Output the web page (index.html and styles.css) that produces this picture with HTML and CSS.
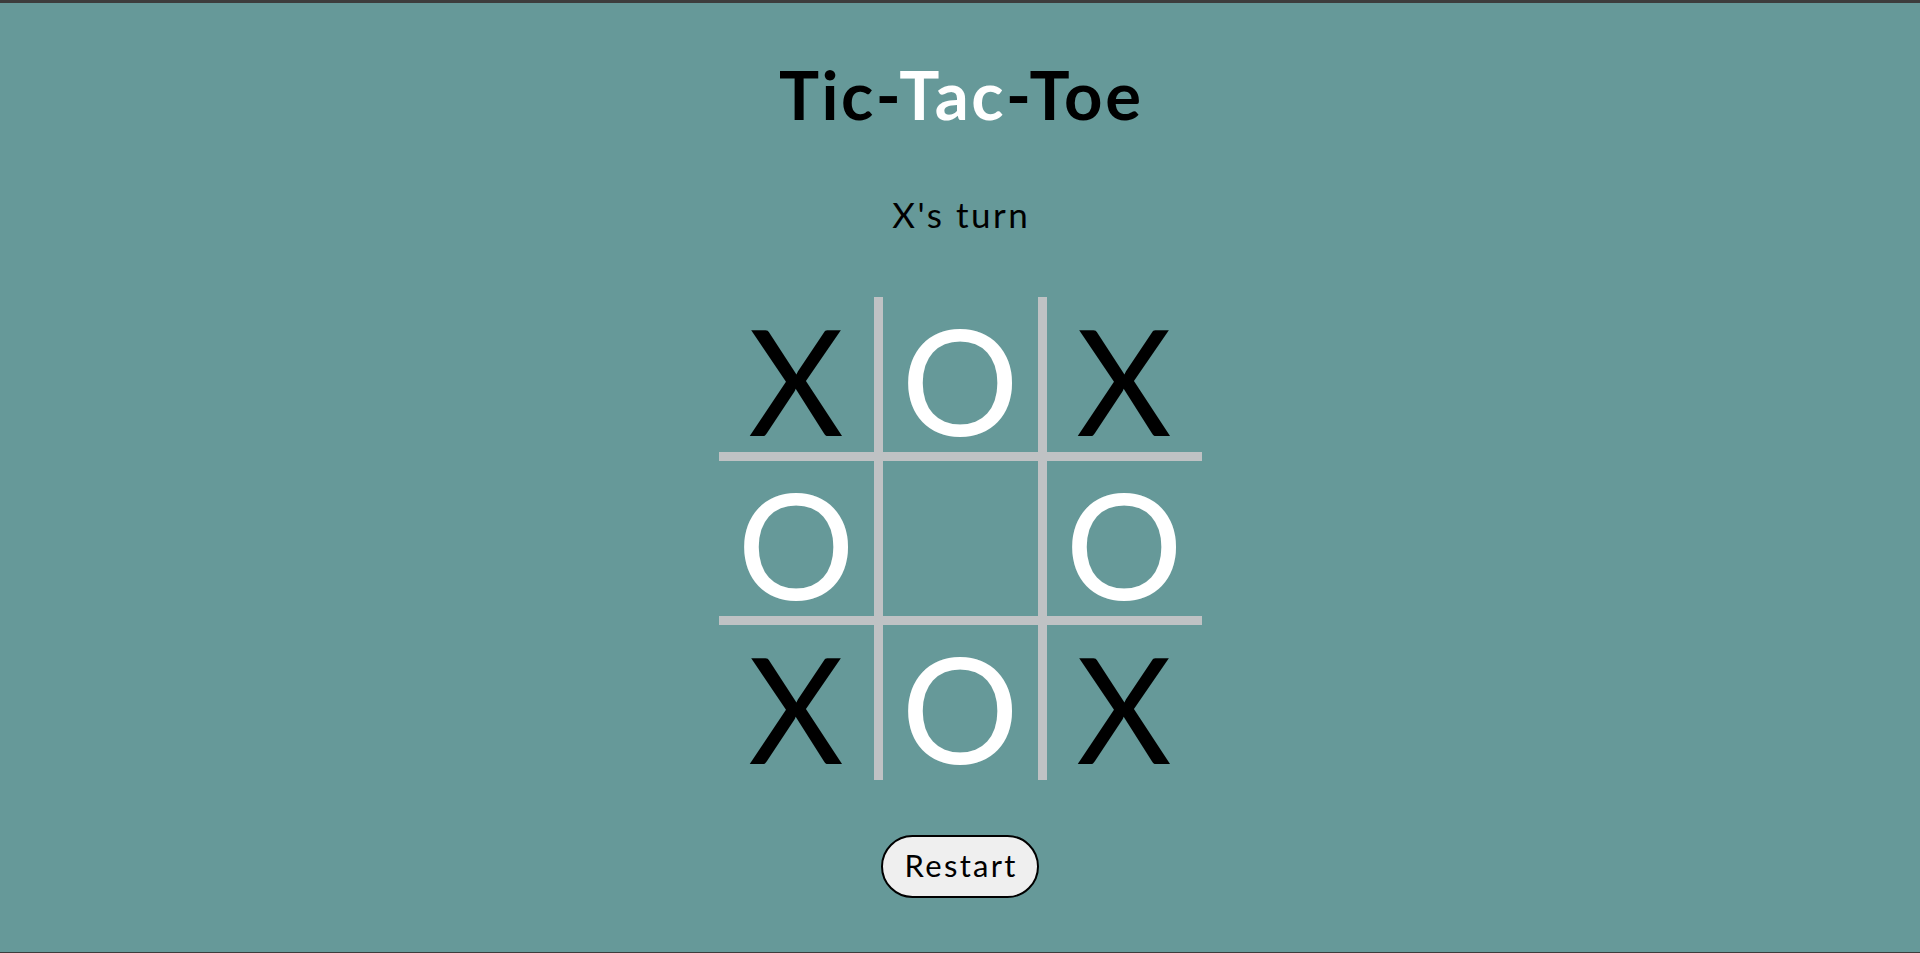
FILE: index.html
```html
<!DOCTYPE html>
<html lang="en">
<head>
<meta charset="utf-8">
<title>Tic-Tac-Toe</title>
<link rel="stylesheet" href="styles.css">
</head>
<body>
  <main class="game">
    <h1 class="title">Tic-<span class="title-accent">Tac</span>-Toe</h1>
    <p class="status">X's turn</p>
    <div class="board">
      <div class="cell cell-x">X</div>
      <div class="cell cell-o">O</div>
      <div class="cell cell-x">X</div>
      <div class="cell cell-o">O</div>
      <div class="cell"></div>
      <div class="cell cell-o">O</div>
      <div class="cell cell-x">X</div>
      <div class="cell cell-o">O</div>
      <div class="cell cell-x">X</div>
    </div>
    <button class="restart" type="button">Restart</button>
  </main>
</body>
</html>
```

FILE: styles.css
```css
* {
  box-sizing: border-box;
}

html {
  background: #3d3d3d;
}

body {
  margin: 3px 0 1px;
  height: calc(100vh - 4px);
  background: #669999;
  font-family: "Lato", "DejaVu Sans", sans-serif;
  color: #000;
}

.game {
  display: flex;
  flex-direction: column;
  align-items: center;
}

.title {
  margin: 58px 0 0;
  padding-left: 2.6px;
  font-size: 67px;
  line-height: 67px;
  font-weight: 700;
  letter-spacing: 2.6px;
}

.title-accent {
  color: #fff;
}

.status {
  margin: 69px 0 0;
  padding-left: 2.5px;
  font-size: 35px;
  line-height: 35px;
  letter-spacing: 2.5px;
}

.board {
  margin-top: 65px;
  display: grid;
  grid-template-columns: repeat(3, 155px);
  grid-template-rows: repeat(3, 155px);
  gap: 9px;
  background: #bfc2c4;
}

.cell {
  display: flex;
  align-items: center;
  justify-content: center;
  padding-top: 9px;
  background: #669999;
  font-size: 147px;
  line-height: 1;
}

.cell-x {
  color: #000;
}

.cell-o {
  color: #fff;
}

.restart {
  margin-top: 55px;
  width: 158px;
  height: 63px;
  padding: 0 0 3px 2.3px;
  border: 2px solid #000;
  border-radius: 32px;
  background: #efefef;
  color: #000;
  font-family: "Lato", "DejaVu Sans", sans-serif;
  font-size: 31px;
  line-height: 1;
  letter-spacing: 2.3px;
}
```
